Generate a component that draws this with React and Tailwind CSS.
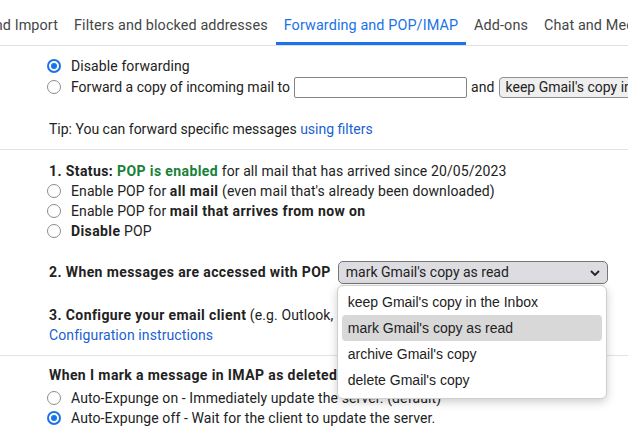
import React from 'react';

const Radio = ({ checked }) =>
  checked ? (
    <span className="w-[14px] h-[14px] rounded-full border-2 border-[#1a73e8] bg-white flex items-center justify-center shrink-0">
      <span className="w-[6px] h-[6px] rounded-full bg-[#1a73e8]" />
    </span>
  ) : (
    <span className="w-[14px] h-[14px] rounded-full border border-[#8c8c8c] bg-white shrink-0" />
  );

const RadioRow = ({ checked, children, className = '' }) => (
  <div className={`h-[20px] flex items-center gap-[10px] whitespace-nowrap ${className}`}>
    <Radio checked={checked} />
    <span>{children}</span>
  </div>
);

const B = ({ children, className = '' }) => (
  <b className={`font-bold tracking-[0.4px] ${className}`}>{children}</b>
);

const tabs = ['Filters and blocked addresses', 'Forwarding and POP/IMAP', 'Add-ons', 'Chat and Meet', 'Advanced'];

const Tabs = () => (
  <div className="flex h-[46px] border-b border-[#e0e0e0] whitespace-nowrap text-[14.4px] text-[#444746]">
    <div className="w-[66px] shrink-0 overflow-hidden flex justify-end pr-2 pt-[10px] items-center border-b-[3px] border-transparent">
      <span>Accounts and Import</span>
    </div>
    {tabs.map(t => {
      const active = t === 'Forwarding and POP/IMAP';
      return (
        <div
          key={t}
          className={`shrink-0 px-2 pt-[10px] flex items-center border-b-[3px] ${
            active ? 'border-[#1a73e8] text-[#1a73e8]' : 'border-transparent'
          }`}
        >
          {t}
        </div>
      );
    })}
  </div>
);

const menuItems = ["keep Gmail's copy in the Inbox", "mark Gmail's copy as read", "archive Gmail's copy", "delete Gmail's copy"];

export default function App() {
  return (
    <div className="w-[628px] h-[432px] overflow-hidden bg-white relative font-['Roboto',sans-serif] text-[14px] tracking-[0.1px] text-[#222222]">
      <Tabs />

      {/* Forwarding */}
      <div className="pl-[47px] pt-[10px] pb-[10px] border-b border-[#e3e3e3]">
        <RadioRow checked>Disable forwarding</RadioRow>
        <div className="h-[22px] flex items-center whitespace-nowrap">
          <Radio />
          <span className="ml-[10px] tracking-normal">Forward a copy of incoming mail to</span>
          <span className="ml-[4px] w-[173px] h-[21px] shrink-0 border border-[#858585] rounded-[2px] bg-white" />
          <span className="ml-[4px]">and</span>
          <span className="ml-[4px] h-[21px] shrink-0 flex items-center px-[6px] bg-[#efefef] border border-[#8f8f8f] rounded-[4px] tracking-normal">
            keep Gmail's copy in the Inbox
          </span>
        </div>
        <div className="mt-[21px] h-[20px] pl-[2px] flex items-center whitespace-nowrap tracking-normal">
          Tip: You can forward specific messages&nbsp;<span className="text-[#1a5fd3]">using filters</span>
        </div>
      </div>

      {/* POP */}
      <div className="pl-[47px] pt-[11px] pb-[10px] border-b border-[#e3e3e3]">
        <div className="h-[20px] pl-[2px] flex items-center whitespace-nowrap">
          <B>1. Status:&nbsp;</B>
          <B className="text-[#188038]">POP is enabled</B>
          &nbsp;for all mail that has arrived since 20/05/2023
        </div>
        <RadioRow>
          Enable POP for <B>all mail</B> (even mail that's already been downloaded)
        </RadioRow>
        <RadioRow>
          Enable POP for <B>mail that arrives from now on</B>
        </RadioRow>
        <RadioRow>
          <B>Disable</B> POP
        </RadioRow>

        <div className="mt-[20px] h-[23px] pl-[2px] flex items-center whitespace-nowrap">
          <B>2. When messages are accessed with POP</B>
          <div className="relative ml-[7px] w-[270px] h-[23px] shrink-0 z-10 tracking-normal">
            <div className="h-full flex items-center justify-between pl-[7px] pr-[7px] bg-[#dddde1] border border-[#767676] rounded-[5px]">
              <span>mark Gmail's copy as read</span>
              <svg width="10" height="6" viewBox="0 0 10 6">
                <path d="M1 1l4 4 4-4" fill="none" stroke="#222" strokeWidth="1.8" />
              </svg>
            </div>
            <div className="absolute left-[-1px] top-[24px] w-[270px] bg-white border border-[#cfcfcf] rounded-[6px] shadow-[0_3px_10px_rgba(0,0,0,0.2)] pt-[3px] pb-[5px] font-['Liberation_Sans',Arial,sans-serif]">
              {menuItems.map((m, i) => (
                <div
                  key={m}
                  className={`mx-[4px] h-[26px] flex items-center pl-[6px] rounded-[4px] ${i === 1 ? 'bg-[#d8d8d8]' : ''}`}
                >
                  {m}
                </div>
              ))}
            </div>
          </div>
        </div>

        <div className="mt-[21px] h-[20px] pl-[2px] flex items-center whitespace-nowrap">
          <B>3. Configure your email client</B>&nbsp;(e.g. Outlook, Eudora, Netscape Mail)
        </div>
        <div className="h-[20px] pl-[2px] flex items-center whitespace-nowrap text-[#1a5fd3]">
          Configuration instructions
        </div>
      </div>

      {/* IMAP */}
      <div className="pl-[47px] pt-[9px]">
        <div className="h-[20px] pl-[2px] flex items-center whitespace-nowrap">
          <B>When I mark a message in IMAP as deleted:</B>
        </div>
        <RadioRow className="mt-[3px]">Auto-Expunge on - Immediately update the server. (default)</RadioRow>
        <RadioRow checked>Auto-Expunge off - Wait for the client to update the server.</RadioRow>
      </div>
    </div>
  );
}
